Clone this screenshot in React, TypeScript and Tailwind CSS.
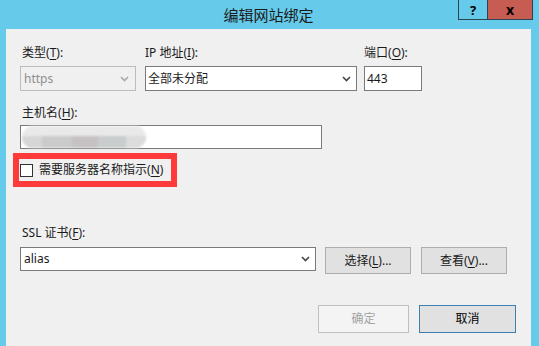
import React from "react";

// little chevron used by the combo boxes
function Chevron({ disabled }: { disabled?: boolean }) {
  return (
    <svg width="9" height="6" viewBox="0 0 9 6" className="shrink-0">
      <polyline
        points="1,1 4.5,4.5 8,1"
        fill="none"
        stroke={disabled ? "#a8a8a8" : "#444444"}
        strokeWidth="1.6"
      />
    </svg>
  );
}

function Acc({ k }: { k: string }) {
  return (
    <>
      (<span className="underline underline-offset-2">{k}</span>)
    </>
  );
}

function App() {
  return (
    <div className="w-[539px] h-[346px] bg-[#66caea] flex flex-col overflow-hidden font-['Noto_Sans','Noto_Sans_CJK_SC',sans-serif] text-[12px] text-[#1a1a1a] leading-[16px]">
      {/* title bar */}
      <div className="relative h-[29px] shrink-0 flex justify-center items-start pt-[5px]">
        <span className="text-[15px] leading-[20px] text-[#1b1b1b] font-['Noto_Sans_CJK_SC',sans-serif] ml-[-2px]">
          编辑网站绑定
        </span>
        <div className="absolute top-0 right-[6px] flex h-[20px]">
          <div className="w-[29px] h-[20px] border border-t-0 border-r-0 border-[#2d4452] flex items-center justify-center font-bold text-[13px] text-black">
            ?
          </div>
          <div className="w-[46px] h-[20px] bg-[#c75c52] border border-t-0 border-[#2d4452] flex items-center justify-center font-bold text-[14px] text-black">
            x
          </div>
        </div>
      </div>

      {/* body */}
      <div className="flex-1 ml-[6px] mr-[8px] bg-[#f0f0f0] pl-[14px] pr-[15px] pt-[16px] flex flex-col">
        {/* row 1 */}
        <div className="flex">
          <div className="flex flex-col w-[116px]">
            <span className="pl-[2px]">
              类型<Acc k="T" />:
            </span>
            <div className="mt-[5px] h-[25px] border border-[#bcbcbc] bg-[#f0f0f0] flex items-center justify-between pl-[3px] pr-[6px] text-[#8f8f8f]">
              <span>https</span>
              <Chevron disabled />
            </div>
          </div>
          <div className="flex flex-col w-[212px] ml-[9px]">
            <span>
              IP 地址<Acc k="I" />:
            </span>
            <div className="mt-[5px] h-[25px] border border-[#7a7a7a] bg-white flex items-center justify-between pl-[2px] pr-[5px]">
              <span>全部未分配</span>
              <Chevron />
            </div>
          </div>
          <div className="flex flex-col w-[58px] ml-[7px]">
            <span>
              端口<Acc k="O" />:
            </span>
            <div className="mt-[5px] h-[25px] border border-[#7a7a7a] bg-white flex items-center pl-[2px]">
              443
            </div>
          </div>
        </div>

        {/* row 2 */}
        <span className="mt-[14px] pl-[2px]">
          主机名<Acc k="H" />:
        </span>
        <div className="mt-[4px] w-[302px] h-[24px] border border-[#7a7a7a] bg-white flex items-center pl-[1px]">
          <div className="flex flex-col w-[124px] h-[22px] rounded-full overflow-hidden blur-[1px]">
            <div className="h-[10px] bg-[#e9e9e9]" />
            <div className="h-[12px] bg-[#c9c9c9] flex">
              <div className="w-[20px] bg-[#d6d6d6]" />
              <div className="w-[30px] bg-[#cbcbcb]" />
              <div className="w-[26px] bg-[#c6c2c3]" />
              <div className="w-[28px] bg-[#cacdcd]" />
              <div className="flex-1 bg-[#dcdcdc]" />
            </div>
          </div>
        </div>

        {/* sni checkbox, red mark */}
        <div className="mt-[4px] ml-[-7px] w-[164px] h-[34px] border-[6px] border-[#ff3a3a] flex items-center pl-[1px]">
          <div className="w-[13px] h-[13px] border border-[#333333] bg-white shrink-0" />
          <span className="ml-[6px] whitespace-nowrap">
            需要服务器名称指示<Acc k="N" />
          </span>
        </div>

        {/* ssl */}
        <span className="mt-[38px] pl-[2px]">
          SSL 证书<Acc k="F" />:
        </span>
        <div className="mt-[6px] flex items-start">
          <div className="w-[296px] h-[24px] border border-[#7a7a7a] bg-white flex items-center justify-between pl-[3px] pr-[5px]">
            <span>alias</span>
            <Chevron />
          </div>
          <button className="ml-[9px] w-[86px] h-[27px] bg-[#e1e1e1] border border-[#adadad] flex items-center justify-center">
            选择<Acc k="L" />...
          </button>
          <button className="ml-[10px] w-[86px] h-[27px] bg-[#e1e1e1] border border-[#adadad] flex items-center justify-center">
            查看<Acc k="V" />...
          </button>
        </div>

        {/* footer */}
        <div className="mt-[31px] flex justify-end gap-[10px]">
          <button className="w-[91px] h-[28px] bg-[#f4f4f4] border border-[#bfbfbf] text-[#a3a3a3] flex items-center justify-center">
            确定
          </button>
          <button className="w-[97px] h-[28px] bg-[#e1e1e1] border border-[#3c7fb1] text-black flex items-center justify-center">
            取消
          </button>
        </div>
      </div>
    </div>
  );
}

export default App;
